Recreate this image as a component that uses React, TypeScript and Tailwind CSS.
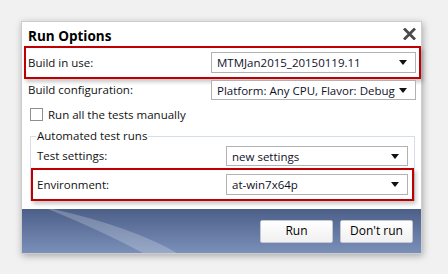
import React from "react";

const font = { fontFamily: '"Open Sans", "Noto Sans", sans-serif' };

function Arrow() {
  return (
    <svg width="8" height="5" viewBox="0 0 8 5" className="shrink-0">
      <path d="M0 0 H8 L4 5 Z" fill="#111" />
    </svg>
  );
}

function Combo({ value, className }: { value: string; className: string }) {
  return (
    <div
      className={`flex items-center justify-between border border-[#b2b2b2] bg-white pl-[5px] pr-[8px] text-[#10102a] ${className}`}
    >
      <span className="whitespace-nowrap leading-[17px]">{value}</span>
      <Arrow />
    </div>
  );
}

export default function App() {
  return (
    <div className="w-[448px] h-[274px] bg-[#f1f1f1] pt-[21px] pl-[21px] text-[11.5px] text-[#111]" style={font}>
      <div className="w-[401px] h-[233px] border border-[#cdcdcd] bg-white flex flex-col shadow-[1px_2px_7px_rgba(0,0,0,0.3)]">
        {/* title */}
        <div className="h-[24px] pt-[5px] pl-[6px] pr-[5px] flex items-start justify-between">
          <span className="text-[13.5px] font-bold leading-[18px] text-black">Run Options</span>
          <svg width="13" height="12" viewBox="0 0 13 12" className="mt-[1px]">
            <path d="M2 1.5 L11 10.5 M11 1.5 L2 10.5" stroke="#4a4a4a" strokeWidth="2.8" strokeLinecap="square" />
          </svg>
        </div>

        {/* build in use */}
        <div className="ml-[2px] h-[33px] border-2 border-[#c00000] flex items-center pl-[2px] pr-[3px] shadow-[2px_3px_4px_rgba(0,0,0,0.22)]">
          <span className="flex-1">Build in use:</span>
          <Combo value="MTMJan2015_20150119.11" className="w-[205px] h-[21px]" />
        </div>

        {/* build configuration */}
        <div className="mt-[1px] h-[20px] flex items-center pl-[6px] pr-[5px]">
          <span className="flex-1">Build configuration:</span>
          <Combo value="Platform: Any CPU, Flavor: Debug" className="w-[205px] h-[20px]" />
        </div>

        {/* checkbox */}
        <div className="mt-[8px] h-[13px] flex items-center pl-[8px]">
          <div className="w-[13px] h-[13px] border border-[#8e8f8f] bg-white" />
          <span className="ml-[5px]">Run all the tests manually</span>
        </div>

        {/* group */}
        <fieldset className="mt-[8px] ml-[8px] w-[385px] border border-b-0 border-[#d5dfe5] px-0">
          <legend className="ml-[5px] px-[1px] leading-[14px]">Automated test runs</legend>
          <div className="mt-[3px] h-[20px] flex items-center pl-[6px] pr-[6px]">
            <span className="flex-1">Test settings:</span>
            <Combo value="new settings" className="w-[182px] h-[20px]" />
          </div>
          <div className="mt-[2px] h-[33px] border-2 border-[#c00000] bg-white flex items-center pl-[4px] pr-[4px] shadow-[2px_3px_4px_rgba(0,0,0,0.22)]">
            <span className="flex-1">Environment:</span>
            <Combo value="at-win7x64p" className="w-[182px] h-[21px]" />
          </div>
        </fieldset>

        <div className="flex-1" />

        {/* bottom band */}
        <div className="relative h-[44px] bg-gradient-to-b from-[#4c5f88] to-[#7b90b9] flex items-center justify-end gap-[7px] pr-[8px] overflow-hidden">
          <svg className="absolute left-0 top-0" width="180" height="44" viewBox="0 0 180 44">
            <path d="M26 0 Q80 22 121 44 L155 44 Q110 18 31 0 Z" fill="rgba(255,255,255,0.22)" />
          </svg>
          <button className="relative w-[73px] h-[23px] rounded-[2px] border border-[#c3c7cf] bg-gradient-to-b from-white to-[#f0f0f0] text-[12px] text-black">
            Run
          </button>
          <button className="relative w-[73px] h-[23px] rounded-[2px] border border-[#c3c7cf] bg-gradient-to-b from-white to-[#f0f0f0] text-[12px] text-black">
            Don't run
          </button>
        </div>
      </div>
    </div>
  );
}
